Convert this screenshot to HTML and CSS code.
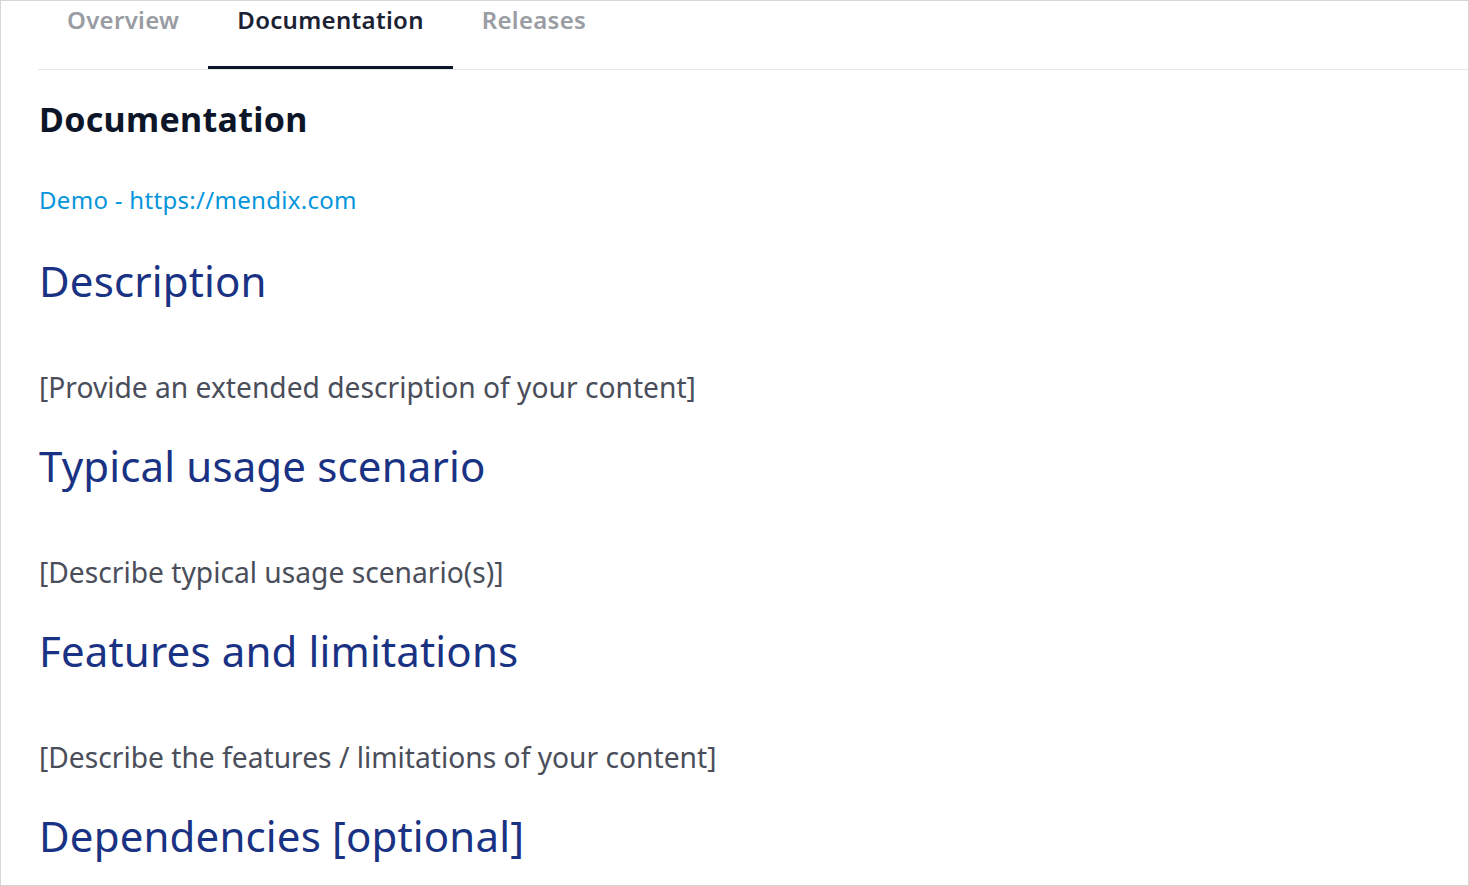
FILE: index.html
```html
<!DOCTYPE html>
<html lang="en">
<head>
<meta charset="utf-8">
<title>Documentation</title>
<link rel="stylesheet" href="styles.css">
</head>
<body>
<div class="frame">
  <nav class="tabs">
    <a class="tab">Overview</a>
    <a class="tab active">Documentation</a>
    <a class="tab">Releases</a>
  </nav>
  <main class="content">
    <h2 class="page-title">Documentation</h2>
    <p class="demo"><a href="#">Demo - https://mendix.com</a></p>
    <h1 class="sec">Description</h1>
    <p class="text">[Provide an extended description of your content]</p>
    <h1 class="sec">Typical usage scenario</h1>
    <p class="text">[Describe typical usage scenario(s)]</p>
    <h1 class="sec">Features and limitations</h1>
    <p class="text">[Describe the features / limitations of your content]</p>
    <h1 class="sec">Dependencies [optional]</h1>
  </main>
</div>
</body>
</html>
```
FILE: styles.css
```css
html, body {
  margin: 0;
  padding: 0;
  height: 100%;
  overflow: hidden;
  background: #fff;
}
body {
  font-family: "Noto Sans", "Open Sans", sans-serif;
}
.frame {
  box-sizing: border-box;
  height: 886px;
  border: 1px solid #d6d6d6;
  overflow: hidden;
}
.tabs {
  display: flex;
  margin-left: 37px;
  height: 68px;
  border-bottom: 1px solid #e6e6e6;
}
.tab {
  display: block;
  padding: 0 29px;
  font-size: 24px;
  letter-spacing: 0.3px;
  font-weight: 600;
  color: #9a9ca3;
  line-height: 38px;
  height: 68px;
  box-sizing: border-box;
}
.tab.active {
  color: #1b2233;
  border-bottom: 3px solid #0c1529;
}
.content {
  padding: 0 38px;
}
.page-title {
  margin: 27px 0 0;
  font-size: 34px;
  letter-spacing: 0.3px;
  font-weight: 700;
  color: #0d1628;
  line-height: 44px;
}
.demo {
  margin: 43px 0 0;
  font-size: 24px;
  letter-spacing: 0.3px;
  line-height: 32px;
}
.demo a {
  color: #0595db;
  text-decoration: none;
}
.sec {
  margin: 0;
  font-size: 42px;
  letter-spacing: 0.15px;
  font-weight: 400;
  color: #193283;
  line-height: 56px;
}
.demo + .sec {
  margin-top: 37px;
}
.text {
  margin: 60px 0 0;
  font-size: 28.2px;
  color: #4a4e5a;
  line-height: 36px;
}
.text + .sec {
  margin-top: 33px;
}
```
